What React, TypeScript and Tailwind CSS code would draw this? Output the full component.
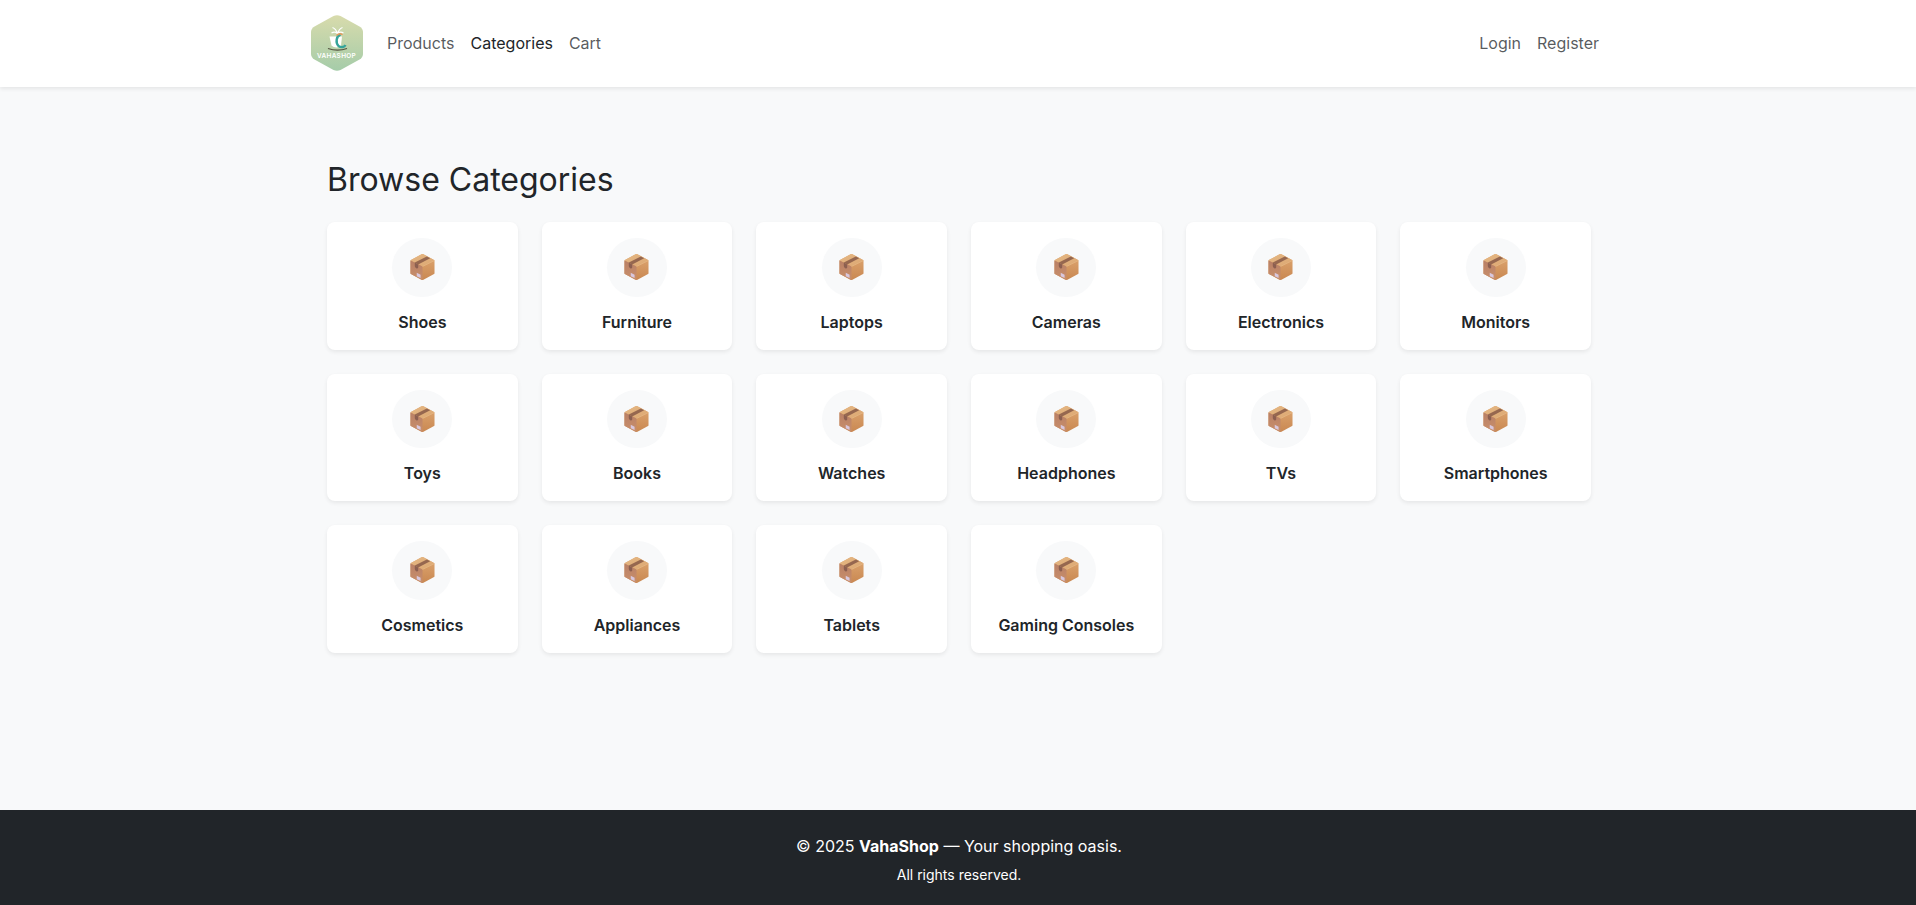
const categories = [
  "Shoes",
  "Furniture",
  "Laptops",
  "Cameras",
  "Electronics",
  "Monitors",
  "Toys",
  "Books",
  "Watches",
  "Headphones",
  "TVs",
  "Smartphones",
  "Cosmetics",
  "Appliances",
  "Tablets",
  "Gaming Consoles",
];

const Logo = () => (
  <svg viewBox="0 0 52 56" className="w-[52px] h-[56px]">
    <defs>
      <linearGradient id="logoBg" x1="0" y1="0" x2="0" y2="1">
        <stop offset="0" stopColor="#d8dbac" />
        <stop offset="1" stopColor="#a5cca9" />
      </linearGradient>
    </defs>
    {/* Hexagon badge */}
    <path
      d="M22.500 1C24.800 0 27.200 0 29.500 1L48.500 11.500C50.800 12.800 52 14.800 52 17V39C52 41.200 50.800 43.200 48.500 44.500L29.500 55C27.200 56 24.800 56 22.500 55L3.500 44.500C1.200 43.200 0 41.200 0 39V17C0 14.800 1.200 12.800 3.500 11.500Z"
      fill="url(#logoBg)"
    />
    {/* Palm */}
    <path
      d="M26.500 18.500C25.500 15.500 24 13.500 21.500 12.500M26.500 18.500C27.500 15.500 29 13.500 31.500 12.500M26.500 18.500C24.500 16.800 22.500 16.800 20.500 18M26.500 18.500C28.500 16.800 30.500 16.800 32.500 18"
      stroke="#ffffff"
      strokeWidth="1.200"
      fill="none"
    />
    {/* Cup */}
    <path d="M18.500 21.500H31L30 30.500C28 33 23 33 20.500 30.500Z" fill="#ffffff" />
    <path
      d="M29.500 19.500C25 21 24.500 28 27.500 31C30.500 33 33.500 32 34.500 30"
      stroke="#35a39a"
      strokeWidth="2.400"
      fill="none"
    />
    <path d="M25.500 20.500C27.500 18.500 30 18.500 31.500 19.800" stroke="#e59b5f" strokeWidth="1.500" fill="none" />
    <path d="M17 33.500C23 35.500 30 35.500 36 33.500" stroke="#54513f" strokeWidth="1.300" fill="none" />
    <text
      x="25.500"
      y="43"
      textAnchor="middle"
      fill="#ffffff"
      fontSize="6.500"
      fontWeight="600"
      letterSpacing="0.300"
      fontFamily="Inter, sans-serif"
    >
      VAHASHOP
    </text>
  </svg>
);

const BoxIcon = () => (
  <svg viewBox="0 0 26 28" className="w-[25px] h-[28px]">
    <defs>
      <linearGradient id="boxTop" x1="0" y1="0" x2="1" y2="1">
        <stop offset="0" stopColor="#e6b985" />
        <stop offset="1" stopColor="#dba671" />
      </linearGradient>
      <linearGradient id="boxLeft" x1="0" y1="0" x2="0" y2="1">
        <stop offset="0" stopColor="#b98066" />
        <stop offset="1" stopColor="#c98f6b" />
      </linearGradient>
      <linearGradient id="boxRight" x1="0" y1="0" x2="0" y2="1">
        <stop offset="0" stopColor="#dfa872" />
        <stop offset="1" stopColor="#c98852" />
      </linearGradient>
    </defs>
    <path d="M12 0.800Q13 0.300 14 0.800L25 6.700Q25.500 7 25.500 7.500V20.500Q25.500 21 25 21.300L14 27.200Q13 27.700 12 27.200L1 21.300Q0.500 21 0.500 20.500V7.500Q0.500 7 1 6.700Z" fill="url(#boxRight)" />
    <path d="M1 6.700L12 0.800Q13 0.300 14 0.800L25 6.700Q25.500 7 25 7.300L13 13.500L1 7.300Q0.500 7 1 6.700Z" fill="url(#boxTop)" />
    <path d="M0.500 7.300L13 13.500V27.600Q12.500 27.500 12 27.200L1 21.300Q0.500 21 0.500 20.500Z" fill="url(#boxLeft)" />
    <path d="M13 13.500L25.500 7.300" stroke="#eec593" strokeWidth="0.500" />
    <path d="M5 9.400L17.500 3L21 4.900L8.500 11.300Z" fill="#96674f" />
    <path d="M5 9.400L8.500 11.300V14.500Q8 16 6.500 15.300Q5 14.500 5 13Z" fill="#8c5f50" />
    <path d="M7 20L11 22V25.500L7 23.500Z" fill="#d8c8de" />
  </svg>
);

export default function App() {
  return (
    <div className="min-h-[905px] flex flex-col bg-[#f8f9fa] font-['Inter',sans-serif] text-[#212529]">
      <header className="h-[87px] bg-white shadow-[0_2px_4px_rgba(0,0,0,0.08)] relative z-10">
        <div className="w-[1320px] mx-auto pl-[13px] pr-[11px] pb-px h-full flex items-center justify-between">
          <div className="flex items-center">
            <a href="#" className="mr-4 block">
              <Logo />
            </a>
            <nav className="flex text-base">
              <a href="#" className="px-2 text-[#212529bf]">Products</a>
              <a href="#" className="px-2 text-[#212529]">Categories</a>
              <a href="#" className="px-2 text-[#212529bf]">Cart</a>
            </nav>
          </div>
          <nav className="flex text-base">
            <a href="#" className="px-2 text-[#212529bf]">Login</a>
            <a href="#" className="px-2 text-[#212529bf]">Register</a>
          </nav>
        </div>
      </header>

      <main className="flex-1 w-[1264px] ml-[327px] pt-[74px]">
        <h2 className="text-[32px] leading-[38px] mb-[23px] font-normal">Browse Categories</h2>
        <div className="grid grid-cols-6 gap-6">
          {categories.map((name) => (
            <a
              key={name}
              href="#"
              className="h-[127.6px] bg-white rounded-lg shadow-[0_2px_4px_rgba(0,0,0,0.075)] p-4 flex flex-col items-center"
            >
              <div className="w-[60px] h-[60px] rounded-full bg-[#f8f9fa] flex items-center justify-center mb-[13px]">
                <BoxIcon />
              </div>
              <span className="text-base leading-6 font-semibold">{name}</span>
            </a>
          ))}
        </div>
      </main>

      <footer className="h-[95px] bg-[#212529] text-white text-center pt-[24px] pl-[2px]">
        <p className="text-base leading-6 mb-[6px]">
          © 2025 <strong className="font-bold">VahaShop</strong> — Your shopping oasis.
        </p>
        <p className="text-sm leading-[21px]">All rights reserved.</p>
      </footer>
    </div>
  );
}
